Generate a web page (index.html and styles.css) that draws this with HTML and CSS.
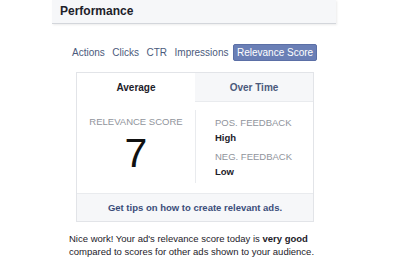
FILE: index.html
```html
<!DOCTYPE html>
<html lang="en">
<head>
  <meta charset="UTF-8" />
  <title>Performance</title>
  <link rel="stylesheet" href="styles.css">
</head>
<body>
  <div id="panel">
    <div id="panel-header">Performance</div>

    <div id="metric-tabs">
      <span class="metric">Actions</span>
      <span class="metric">Clicks</span>
      <span class="metric">CTR</span>
      <span class="metric">Impressions</span>
      <span class="metric active">Relevance Score</span>
    </div>

    <div id="score-card">
      <div class="card-tabs">
        <div class="card-tab selected">Average</div>
        <div class="card-tab">Over Time</div>
      </div>
      <div class="card-body">
        <div class="score-col">
          <div class="label">RELEVANCE SCORE</div>
          <div class="score">7</div>
        </div>
        <div class="feedback-col">
          <div class="label">POS. FEEDBACK</div>
          <div class="value">High</div>
          <div class="label neg">NEG. FEEDBACK</div>
          <div class="value">Low</div>
        </div>
      </div>
      <div class="card-footer">Get tips on how to create relevant ads.</div>
    </div>

    <p id="summary">
      Nice work! Your ad's relevance score today is <b>very good</b><br>
      compared to scores for other ads shown to your audience.
    </p>
  </div>
</body>
</html>
```

FILE: styles.css
```css
body {
  margin: 0;
  background: #ffffff;
  font-family: "Liberation Sans", Arial, sans-serif;
  color: #1d2129;
}
#panel {
  width: 284px;
  margin-left: 52px;
}
#panel-header {
  height: 24px;
  padding-left: 8px;
  line-height: 23px;
  font-size: 12px;
  font-weight: bold;
  color: #1d2129;
  background: #f6f7f9;
  border-bottom: 1px solid #d3d6db;
  box-shadow: 1px 1px 2px rgba(0,0,0,0.08);
  box-sizing: border-box;
}
#metric-tabs {
  display: flex;
  align-items: center;
  margin-top: 20px;
  padding-left: 17px;
  font-size: 10px;
  color: #4b5a7c;
}
.metric {
  padding: 2px 3px;
  margin-right: 1.5px;
}
.metric.active {
  background: #6a7fb6;
  color: #fff;
  border: 1px solid #5b6fa6;
  border-radius: 2px;
  padding: 2px 3px;
}
#score-card {
  width: 238px;
  margin: 11px 0 0 24px;
  border: 1px solid #e2e4e8;
  box-sizing: border-box;
}
.card-tabs {
  display: flex;
  height: 29px;
}
.card-tab {
  flex: 1;
  display: flex;
  align-items: center;
  justify-content: center;
  font-size: 10px;
  font-weight: bold;
  color: #4b5a7c;
  background: #f6f7f9;
  border-bottom: 1px solid #e9ebee;
}
.card-tab.selected {
  background: #fff;
  color: #1d2129;
  border-bottom-color: #fff;
}
.card-body {
  display: flex;
  height: 91px;
  padding-top: 8px;
  box-sizing: border-box;
}
.score-col {
  width: 118px;
  text-align: center;
  border-right: 1px solid #e9ebee;
  margin-bottom: 10px;
}
.feedback-col {
  padding-left: 19px;
  padding-top: 1px;
}
.label {
  font-size: 9.5px;
  color: #90949c;
  line-height: 12px;
  margin-top: 6px;
}
.feedback-col .label.neg {
  margin-top: 7px;
}
.value {
  font-size: 9.5px;
  font-weight: bold;
  color: #1d2129;
  line-height: 13px;
  margin-top: 2px;
}
.score {
  font-size: 41px;
  line-height: 40px;
  margin-top: 5px;
  color: #111;
}
.card-footer {
  height: 28px;
  line-height: 28px;
  text-align: center;
  font-size: 9.5px;
  font-weight: bold;
  color: #3b4d7a;
  background: #f6f7f9;
  border-top: 1px solid #e9ebee;
  box-sizing: border-box;
}
#summary {
  margin: 10px 0 0 17px;
  font-size: 9.5px;
  line-height: 13px;
  color: #1d2129;
}
```
